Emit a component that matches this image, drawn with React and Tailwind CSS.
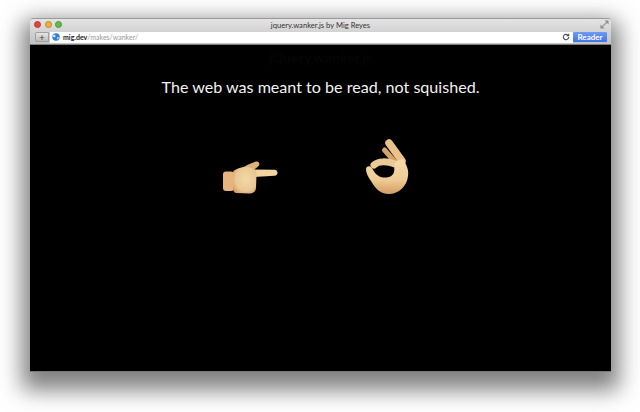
const PointingHand = () => (
  <svg width="58" height="38" viewBox="0 0 58 38" className="shrink-0">
    <defs>
      <linearGradient id="skinFill" x1="0" y1="0" x2="0" y2="1">
        <stop offset="0" stopColor="#f6dcab" />
        <stop offset="0.6" stopColor="#eecb95" />
        <stop offset="1" stopColor="#d39a62" />
      </linearGradient>
      <radialGradient id="palmFill" cx="0.55" cy="0.45" r="0.7">
        <stop offset="0" stopColor="#f2d8a8" />
        <stop offset="0.65" stopColor="#eac795" />
        <stop offset="1" stopColor="#cf9359" />
      </radialGradient>
    </defs>
    {/* cuff */}
    <rect x="2" y="13.5" width="11" height="19.5" rx="3" fill="#e6b47c" />
    <path d="M13 15 V32" stroke="#c98f58" strokeWidth="1" />
    {/* thumb */}
    <path d="M17 12 C24 8 30 5 35 3.5 C38.5 3 39.5 7 37 8.5 C33 12 29 14 25 16 Z" fill="#dfb078" />
    {/* index finger */}
    <path d="M30 11.5 L53.5 11.8 C57.5 12.2 57.5 17.4 53.5 17.8 L33 19 Z" fill="#f1d4a0" />
    {/* palm */}
    <path d="M14 12 C18 9.5 24 8.5 29 9.5 C34 10.5 35.5 13 35.5 17 L35 30 C34.5 34 32 35.5 28 35.5 L15 35 C13 34.5 12 33 12 30 L12 15 C12 13.5 12.6 12.6 14 12 Z" fill="url(#palmFill)" />
  </svg>
);

const OkHand = () => (
  <svg width="46" height="58" viewBox="0 0 46 58" className="shrink-0">
    {/* back fingers */}
    <path d="M26 5 L39 23" stroke="#eac28a" strokeWidth="7.5" strokeLinecap="round" fill="none" />
    <path d="M21.5 12 L33 25" stroke="#d5a26a" strokeWidth="5" strokeLinecap="round" fill="none" />
    {/* index finger */}
    <path d="M11 27 C15 23 24 23 32 26" stroke="#ecca96" strokeWidth="7" strokeLinecap="round" fill="none" />
    {/* palm and thumb */}
    <path
      fill="url(#skinFill)"
      d="M3 31 C3 28 7 27 9 30 C11 34 14 38.5 20 39.5 C26 40 30 38 31 34 C32 30 30 27 33 23 L40 21 C44 27 46 33 45 38 C44 48 36 56 26 56 C17 56 12 50 8 43 C5 39 3 35 3 31 Z"
    />
  </svg>
);

export default function App() {
  return (
    <div className="w-[640px] h-[412px] bg-white pl-[30px] pt-[18px] overflow-hidden font-['Lato',sans-serif]">
      <div className="w-[581px] h-[354px] flex flex-col rounded-t-[3px] shadow-[0_10px_22px_8px_rgba(0,0,0,0.5)]">
        {/* title bar */}
        <div className="h-[27px] shrink-0 flex flex-col bg-gradient-to-b from-[#e4e4e4] to-[#c2c2c2] border-t border-b border-t-[#9a9a9a] border-b-[#808080] rounded-t-[3px]">
          <div className="relative h-[12px] flex items-center justify-center">
            <div className="absolute left-[4px] top-[2px] flex gap-[3.5px]">
              <span className="w-[7px] h-[7px] rounded-full bg-[#e8413d] border border-[#b0403a]" />
              <span className="w-[7px] h-[7px] rounded-full bg-[#f0b030] border border-[#b88a30]" />
              <span className="w-[7px] h-[7px] rounded-full bg-[#62bd45] border border-[#4f9440]" />
            </div>
            <span className="text-[7.6px] leading-none text-[#333] mt-[1px]">
              jquery.wanker.js by Mig Reyes
            </span>
            <svg width="9" height="9" viewBox="0 0 9 9" className="absolute right-[2px] top-[1px]">
              <path d="M4.5 0.5 H8.5 V4.5 Z" fill="#8a8a8a" />
              <path d="M0.5 4.5 V8.5 H4.5 Z" fill="#8a8a8a" />
              <path d="M2 7 L7 2" stroke="#9a9a9a" strokeWidth="1.2" />
            </svg>
          </div>
          <div className="h-[12px] flex items-center pl-[5px] pr-[4px]">
            <div className="w-[14px] h-[10px] mr-[1px] flex items-center justify-center bg-gradient-to-b from-[#e6e6e6] to-[#bcbcbc] border border-[#a0a0a0] rounded-l-[2px] text-[10px] leading-none text-[#444]">
              +
            </div>
            <div className="flex-1 h-[11px] flex items-center bg-white pl-[2px] pr-[3px]">
              <svg width="8" height="8" viewBox="0 0 8 8" className="shrink-0 mr-[3px]">
                <circle cx="4" cy="4" r="3.7" fill="#2f7fd6" />
                <path d="M2 1.5 C3.5 2 4 3 3.2 4 C2 4.5 1 4 0.6 3 Z M5 4 L7 4.5 L5.5 6.8 Z" fill="#dfe9f2" />
              </svg>
              <span className="text-[7px] leading-none font-bold text-[#222]">mig.dev</span>
              <span className="text-[7px] leading-none text-[#999]">/makes/wanker/</span>
              <svg width="8" height="8" viewBox="0 0 24 24" fill="none" stroke="#555" strokeWidth="3.5" className="ml-auto">
                <path d="M20 12a8 8 0 1 1-2.5-5.8" />
                <path d="M20 2v6h-6" />
              </svg>
            </div>
            <div className="w-[34px] h-[10px] flex items-center justify-center bg-gradient-to-b from-[#6f9bf5] to-[#3f73e8] rounded-[1px] text-[8px] leading-none font-bold text-white">
              Reader
            </div>
          </div>
        </div>

        {/* page, dimmed by the overlay */}
        <div className="flex-1 bg-black flex flex-col items-center rounded-b-[1px] border-b border-[#777]">
          <p className="mt-[4px] h-[18px] text-[14px] leading-[18px] font-bold text-[#050505]">jQuery.wanker.js</p>
          <p className="mt-[8px] text-[16.1px] leading-[24px] text-[#f2f2f2] whitespace-nowrap">
            The web was meant to be read, not squished.
          </p>
          <div className="mt-[39px] mr-[12px] flex items-end gap-[84px]">
            <PointingHand />
            <OkHand />
          </div>
        </div>
      </div>
    </div>
  );
}
